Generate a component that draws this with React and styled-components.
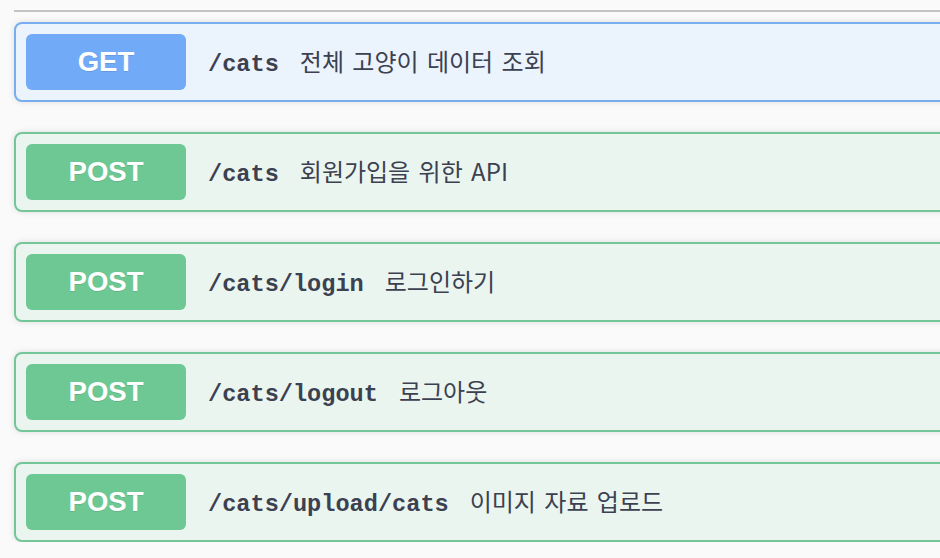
import React from "react";
import styled, { createGlobalStyle } from "styled-components";

const GlobalStyle = createGlobalStyle`
  html, body {
    margin: 0;
    padding: 0;
    background: #fafafa;
    overflow: hidden;
  }
`;

const methods = {
  get: { badge: "#71abf7", border: "#78adef", bg: "#ebf3fc" },
  post: { badge: "#6ec893", border: "#74c698", bg: "#ebf5ef" },
};

const routes = [
  { method: "get", path: "/cats", desc: "전체 고양이 데이터 조회" },
  { method: "post", path: "/cats", desc: "회원가입을 위한 API" },
  { method: "post", path: "/cats/login", desc: "로그인하기" },
  { method: "post", path: "/cats/logout", desc: "로그아웃" },
  { method: "post", path: "/cats/upload/cats", desc: "이미지 자료 업로드" },
];

export default function App() {
  return (
    <>
      <GlobalStyle />
      <Page>
        <TagLine />
        <List>
          {routes.map((r, i) => (
            <Block key={i} $method={r.method}>
              <Method $method={r.method}>{r.method.toUpperCase()}</Method>
              <Path>{r.path}</Path>
              <Description>{r.desc}</Description>
            </Block>
          ))}
        </List>
      </Page>
    </>
  );
}

const Page = styled.div`
  padding: 10px 0 0 14px;
  width: 980px;
`;
const TagLine = styled.div`
  height: 2px;
  background: #c4c4c4;
`;
const List = styled.div`
  display: flex;
  flex-direction: column;
  gap: 30px;
  margin-top: 10px;
`;
const Block = styled.div`
  display: flex;
  align-items: center;
  padding: 10px;
  border: 2px solid ${(p) => methods[p.$method].border};
  border-radius: 8px;
  background: ${(p) => methods[p.$method].bg};
  box-shadow: 0 0 6px rgba(0, 0, 0, 0.12);
`;
const Method = styled.div`
  width: 160px;
  height: 56px;
  display: flex;
  align-items: center;
  justify-content: center;
  border-radius: 6px;
  background: ${(p) => methods[p.$method].badge};
  color: #fff;
  font-family: "Liberation Sans", Arial, sans-serif;
  font-weight: 700;
  font-size: 27.5px;
  text-shadow: 0 1px 0 rgba(0, 0, 0, 0.1);
`;
const Path = styled.span`
  margin-left: 22px;
  padding-top: 4px;
  font-family: "Liberation Mono", "Courier New", monospace;
  font-weight: 700;
  font-size: 23.6px;
  color: #3b4151;
`;
const Description = styled.span`
  margin-left: 21px;
  margin-top: -4px;
  font-family: "Noto Sans CJK KR", "Noto Sans", sans-serif;
  font-size: 24px;
  word-spacing: 3px;
  color: #3b4151;
`;
